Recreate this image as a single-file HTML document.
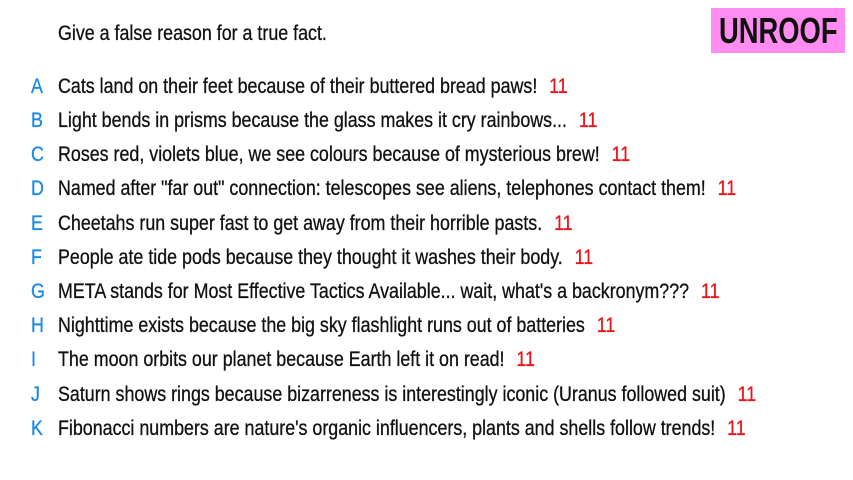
<!DOCTYPE html>
<html><head><meta charset="utf-8"><style>
body{margin:0;width:853px;height:480px;background:#fff;position:relative;overflow:hidden;font-family:"Liberation Sans",sans-serif;color:#111;}
.q{position:absolute;left:58px;top:22px;font-size:21px;transform:scaleX(0.85);transform-origin:left;white-space:nowrap;-webkit-text-stroke:0.3px #111;}
.logo{position:absolute;left:711px;top:8px;width:134px;height:45px;background:#ff8cf0;}
.logo span{position:absolute;left:8px;top:0;font-weight:bold;font-size:36px;line-height:45px;color:#111;transform:scaleX(0.76);transform-origin:left;white-space:nowrap;}
.row{position:absolute;left:0;height:30px;line-height:30px;font-size:21px;white-space:nowrap;-webkit-text-stroke:0.3px currentColor;}
.row b{position:absolute;left:31px;color:#1a8ae6;font-weight:normal;transform:scaleX(0.85);transform-origin:left;}
.row span{position:absolute;left:58px;transform:scaleX(0.85);transform-origin:left;}
.row i{font-style:normal;color:#e8141a;margin-left:14px;}
</style></head><body>
<div class="q">Give a false reason for a true fact.</div>
<div class="logo"><span>UNROOF</span></div>
<div class="row" style="top:72px"><b>A</b><span>Cats land on their feet because of their buttered bread paws!<i>11</i></span></div>
<div class="row" style="top:106px"><b>B</b><span>Light bends in prisms because the glass makes it cry rainbows...<i>11</i></span></div>
<div class="row" style="top:140px"><b>C</b><span>Roses red, violets blue, we see colours because of mysterious brew!<i>11</i></span></div>
<div class="row" style="top:174px"><b>D</b><span>Named after "far out" connection: telescopes see aliens, telephones contact them!<i>11</i></span></div>
<div class="row" style="top:209px"><b>E</b><span>Cheetahs run super fast to get away from their horrible pasts.<i>11</i></span></div>
<div class="row" style="top:243px"><b>F</b><span>People ate tide pods because they thought it washes their body.<i>11</i></span></div>
<div class="row" style="top:277px"><b>G</b><span>META stands for Most Effective Tactics Available... wait, what's a backronym???<i>11</i></span></div>
<div class="row" style="top:311px"><b>H</b><span>Nighttime exists because the big sky flashlight runs out of batteries<i>11</i></span></div>
<div class="row" style="top:345px"><b>I</b><span>The moon orbits our planet because Earth left it on read!<i>11</i></span></div>
<div class="row" style="top:380px"><b>J</b><span>Saturn shows rings because bizarreness is interestingly iconic (Uranus followed suit)<i>11</i></span></div>
<div class="row" style="top:414px"><b>K</b><span>Fibonacci numbers are nature's organic influencers, plants and shells follow trends!<i>11</i></span></div>
</body></html>
